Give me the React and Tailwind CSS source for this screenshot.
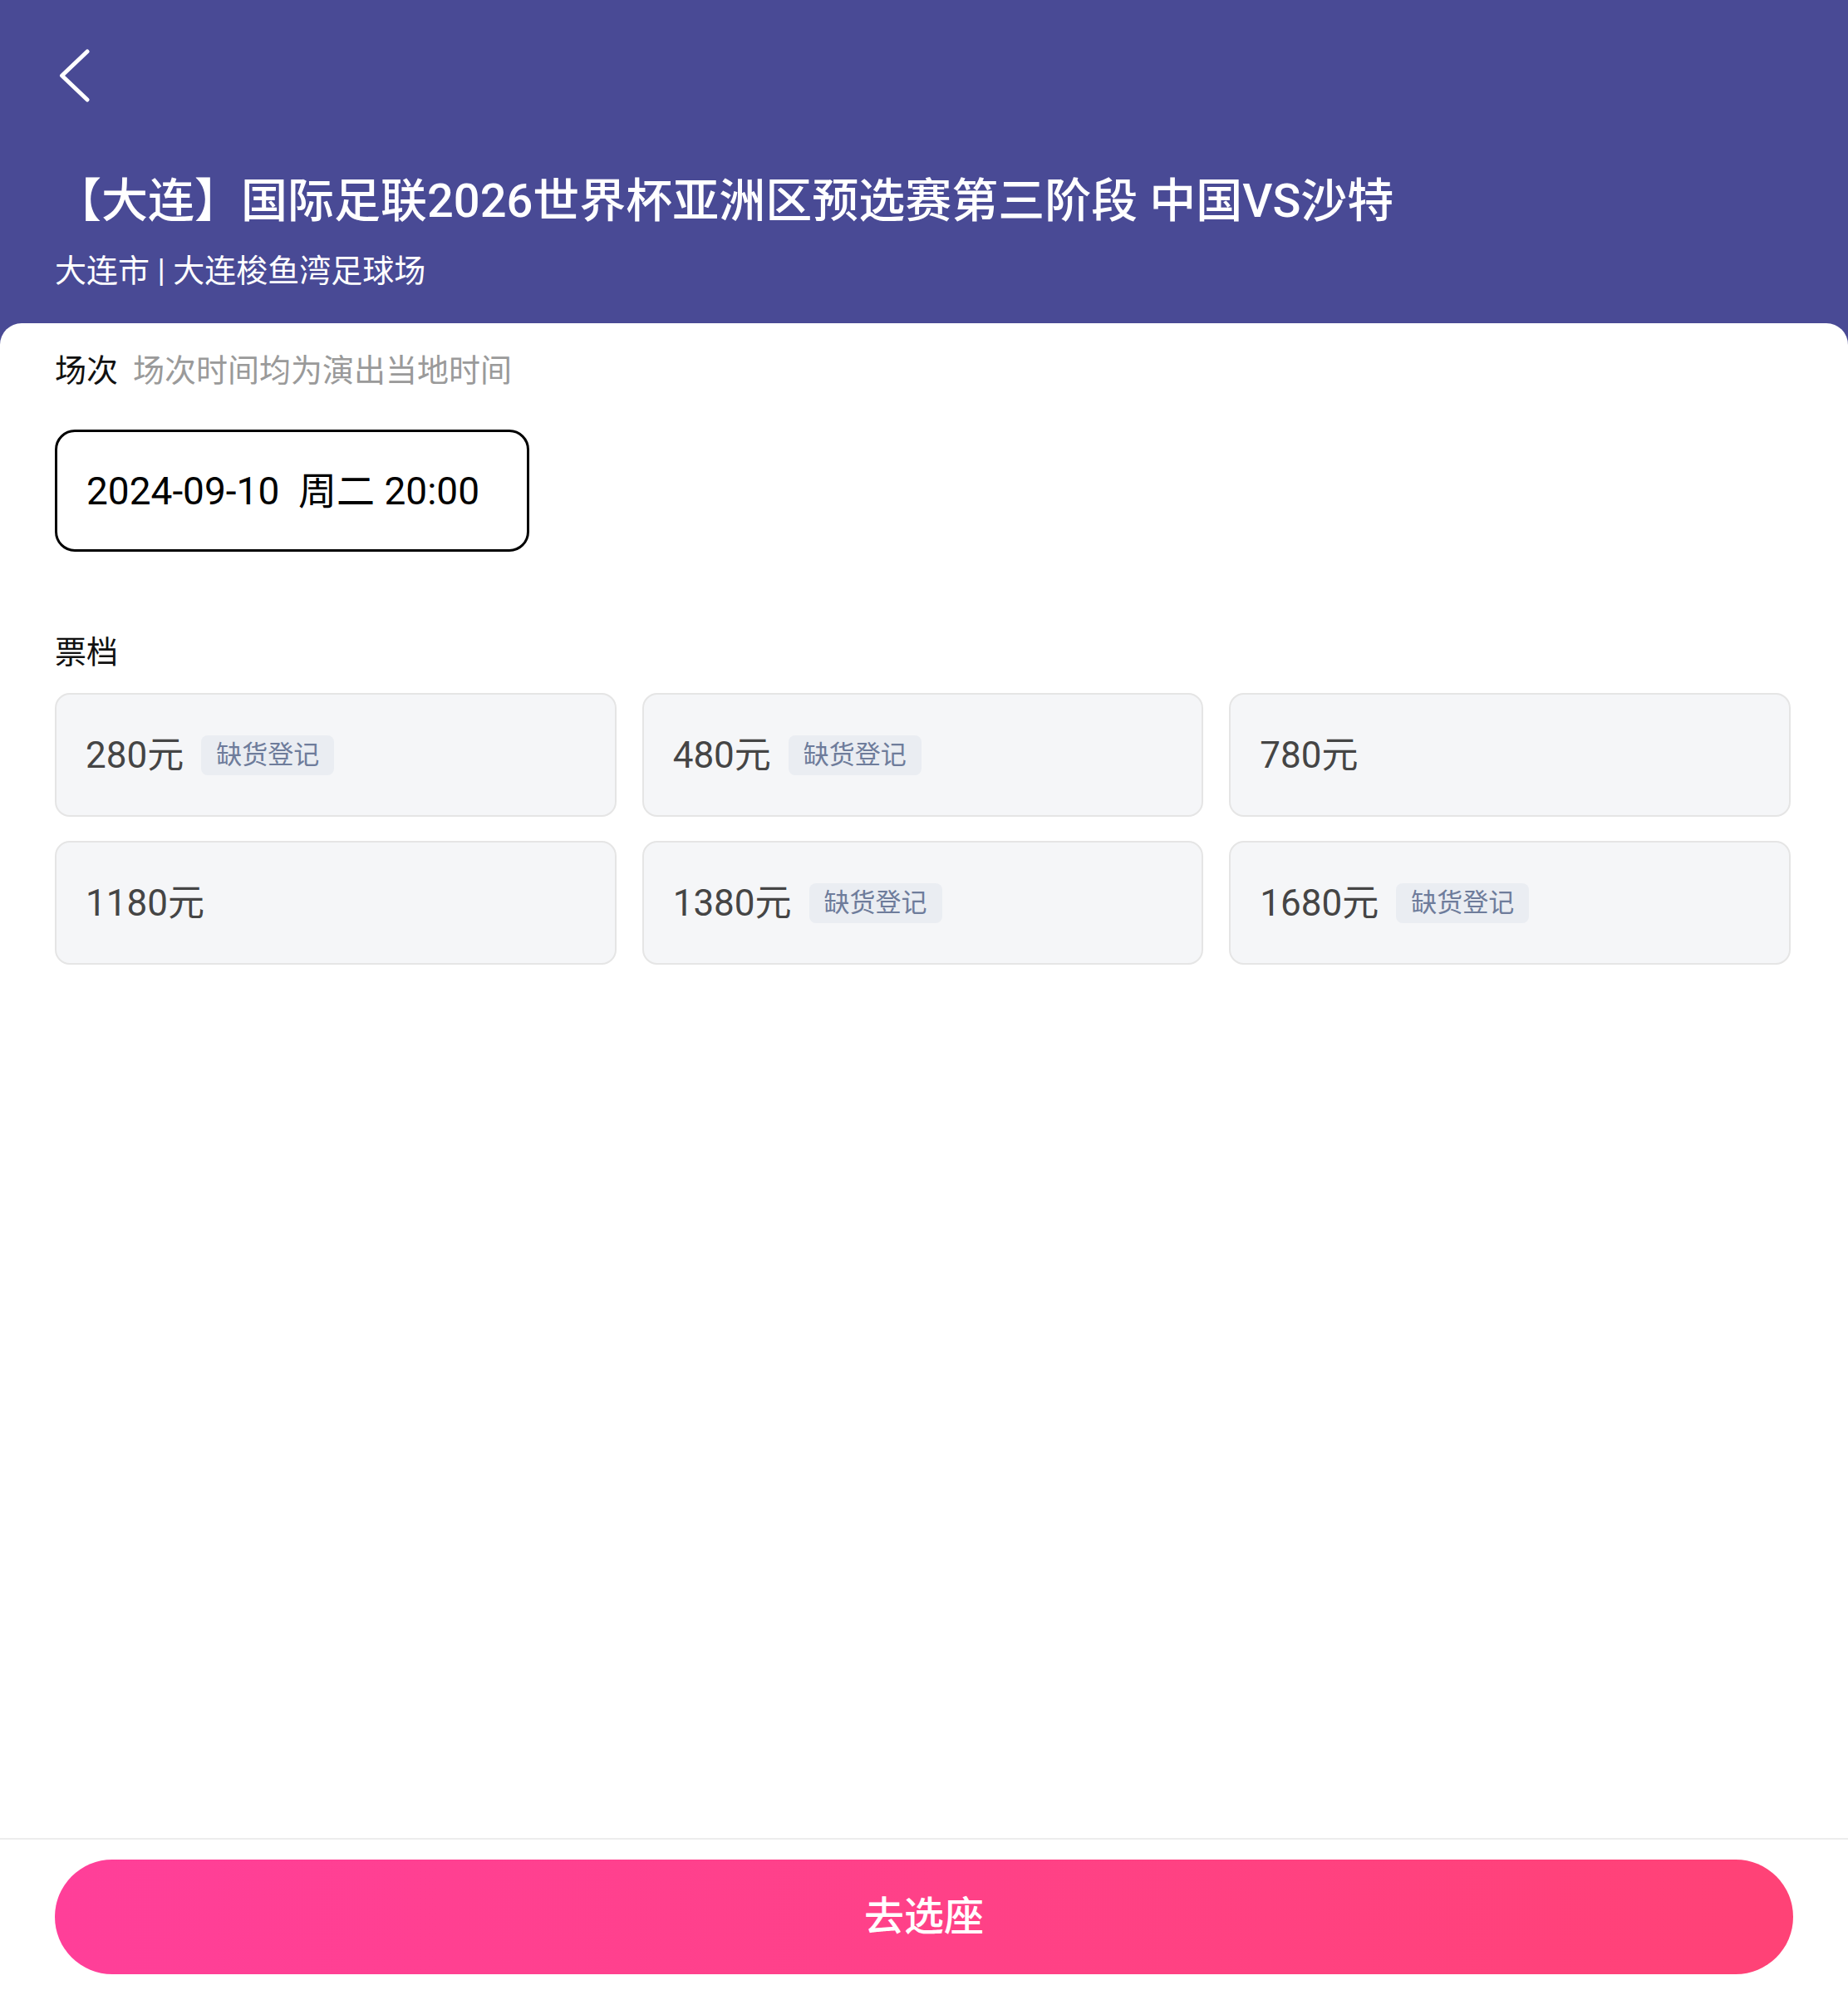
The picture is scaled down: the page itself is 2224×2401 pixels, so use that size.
const tickets = [
    { price: "280元", soldOut: true },
    { price: "480元", soldOut: true },
    { price: "780元", soldOut: false },
    { price: "1180元", soldOut: false },
    { price: "1380元", soldOut: true },
    { price: "1680元", soldOut: true },
];

function BackIcon() {
    return (
        <svg width="38" height="64" viewBox="0 0 38 64" fill="none" className="block">
            <path
                d="M34 3 L3.5 32 L34 61"
                stroke="white"
                strokeWidth="5"
                strokeLinecap="round"
                strokeLinejoin="round"
            />
        </svg>
    );
}

function TicketCard({ price, soldOut }) {
    return (
        <div className="flex items-center h-[149px] pl-[35px] rounded-[18px] border-2 border-[#e5e5e5] bg-[#f5f6f8]">
            <span className="text-[44px] leading-none text-[#454545]">{price}</span>
            {soldOut && (
                <span className="ml-[21px] flex items-center h-[48px] px-[18px] rounded-lg bg-[#eaedf2] text-[31px] leading-none text-[#6e7c9b]">
                    缺货登记
                </span>
            )}
        </div>
    );
}

export default function App() {
    return (
        <div className="flex flex-col h-[2401px] bg-white font-[Roboto,'Noto_Sans_CJK_SC',sans-serif]">
            <div className="bg-[#494a95] pt-[59px] pb-[70px] pl-[71px] pr-[66px] text-white">
                <BackIcon />
                <h1 className="mt-[91px] -ml-[5px] text-[56px] leading-[56px] font-medium">
                    【大连】国际足联2026世界杯亚洲区预选赛第三阶段 中国VS沙特
                </h1>
                <p className="mt-[37px] -ml-[5px] text-[38px] leading-[38px]">
                    大连市 | 大连梭鱼湾足球场
                </p>
            </div>

            <div className="flex-1 -mt-[26px] rounded-t-[26px] bg-white px-[66px] pt-[38px]">
                <div className="flex items-center h-[38px]">
                    <span className="text-[38px] leading-none text-[#111]">场次</span>
                    <span className="ml-[18px] text-[38px] leading-none text-[#9a9a9a]">
                        场次时间均为演出当地时间
                    </span>
                </div>

                <div className="mt-[52px] flex items-center w-[571px] h-[147px] pl-[35px] rounded-[24px] border-[3px] border-black">
                    <span className="text-[46px] leading-none text-black whitespace-pre">
                        2024-09-10  周二 20:00
                    </span>
                </div>

                <div className="mt-[102px] h-[38px] text-[38px] leading-none text-[#111]">票档</div>

                <div className="mt-[30px] grid grid-cols-3 gap-x-[31px] gap-y-[29px] pr-[3px]">
                    {tickets.map((t) => (
                        <TicketCard key={t.price} {...t} />
                    ))}
                </div>
            </div>

            <div className="border-t-2 border-[#ededed] pt-[24px] pb-[25px] px-[66px]">
                <button className="flex items-center justify-center w-full h-[138px] rounded-full bg-linear-to-r from-[#ff3f99] to-[#ff4276] text-white text-[48px] leading-none font-medium">
                    去选座
                </button>
            </div>
        </div>
    );
}
